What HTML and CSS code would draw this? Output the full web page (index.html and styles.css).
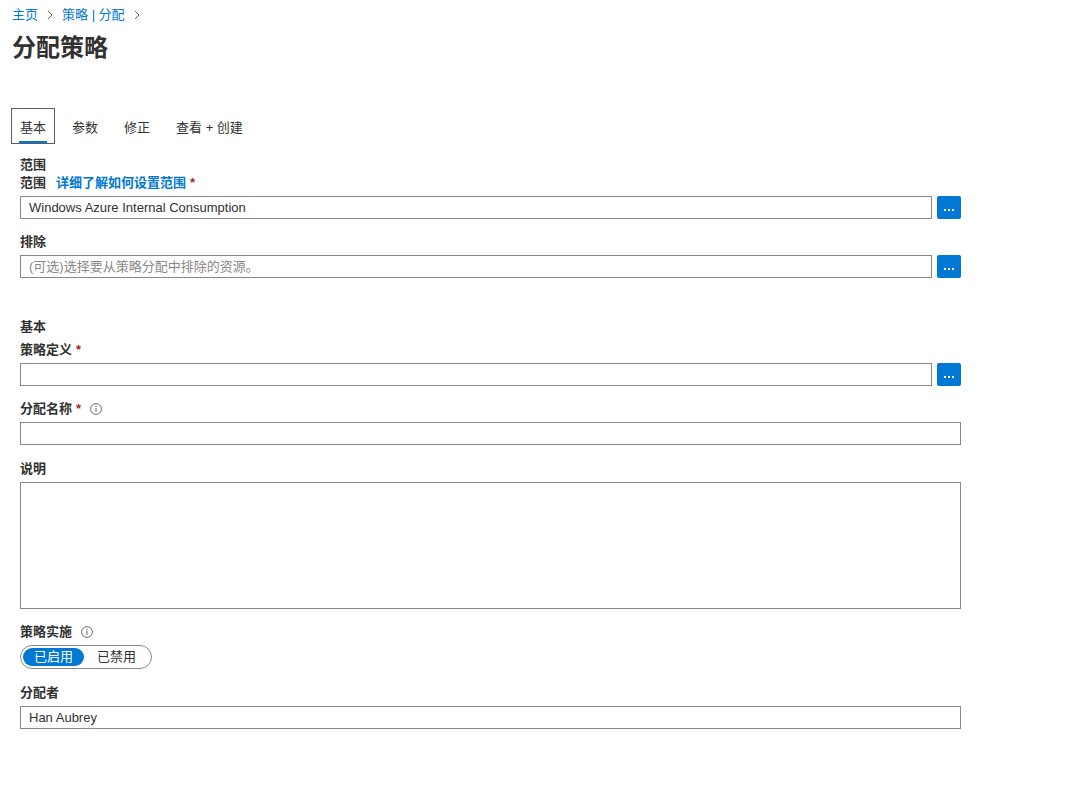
FILE: index.html
```html
<!DOCTYPE html>
<html lang="zh-CN">
<head>
    <meta charset="UTF-8">
    <meta name="viewport" content="width=device-width, initial-scale=1.0">
    <title>分配策略</title>
    <link rel="stylesheet" href="styles.css">
</head>
<body>
    <nav class="breadcrumb">
        <a href="#">主页</a>
        <span class="crumb-sep"><svg width="8" height="10" viewBox="0 0 8 10"><path d="M2 1l4 4-4 4" fill="none" stroke="#605e5c" stroke-width="1"/></svg></span>
        <a href="#">策略 | 分配</a>
        <span class="crumb-sep"><svg width="8" height="10" viewBox="0 0 8 10"><path d="M2 1l4 4-4 4" fill="none" stroke="#605e5c" stroke-width="1"/></svg></span>
    </nav>
    <h1 class="page-title">分配策略</h1>

    <div class="tabs">
        <div class="tab active">基本</div>
        <div class="tab">参数</div>
        <div class="tab">修正</div>
        <div class="tab">查看 + 创建</div>
    </div>

    <form class="form">
        <section class="section">
            <div class="section-title">范围</div>
            <div class="field first">
                <label class="label">范围 <a href="#" class="label-link">详细了解如何设置范围</a><span class="req">*</span></label>
                <div class="input-row">
                    <input class="input" type="text" value="Windows Azure Internal Consumption" readonly>
                    <button type="button" class="browse-btn" aria-label="浏览"><svg width="10" height="3" viewBox="0 0 10 3"><rect x="0" y="0" width="2" height="2" fill="#fff"/><rect x="4" y="0" width="2" height="2" fill="#fff"/><rect x="8" y="0" width="2" height="2" fill="#fff"/></svg></button>
                </div>
            </div>
            <div class="field">
                <label class="label">排除</label>
                <div class="input-row">
                    <input class="input" type="text" placeholder="(可选)选择要从策略分配中排除的资源。" readonly>
                    <button type="button" class="browse-btn" aria-label="浏览"><svg width="10" height="3" viewBox="0 0 10 3"><rect x="0" y="0" width="2" height="2" fill="#fff"/><rect x="4" y="0" width="2" height="2" fill="#fff"/><rect x="8" y="0" width="2" height="2" fill="#fff"/></svg></button>
                </div>
            </div>
        </section>

        <section class="section section-basic">
            <div class="section-title">基本</div>
            <div class="field first">
                <label class="label">策略定义<span class="req">*</span></label>
                <div class="input-row">
                    <input class="input" type="text" readonly>
                    <button type="button" class="browse-btn" aria-label="浏览"><svg width="10" height="3" viewBox="0 0 10 3"><rect x="0" y="0" width="2" height="2" fill="#fff"/><rect x="4" y="0" width="2" height="2" fill="#fff"/><rect x="8" y="0" width="2" height="2" fill="#fff"/></svg></button>
                </div>
            </div>
            <div class="field">
                <label class="label">分配名称<span class="req">*</span>
                    <svg class="info" width="12" height="12" viewBox="0 0 12 12"><circle cx="6" cy="6" r="5.4" fill="none" stroke="#605e5c" stroke-width="0.9"/><rect x="5.5" y="5" width="1" height="3.8" fill="#605e5c"/><circle cx="6" cy="3.5" r="0.65" fill="#605e5c"/></svg>
                </label>
                <input class="input" type="text">
            </div>
            <div class="field">
                <label class="label">说明</label>
                <textarea class="textarea"></textarea>
            </div>
            <div class="field">
                <label class="label">策略实施
                    <svg class="info" width="12" height="12" viewBox="0 0 12 12"><circle cx="6" cy="6" r="5.4" fill="none" stroke="#605e5c" stroke-width="0.9"/><rect x="5.5" y="5" width="1" height="3.8" fill="#605e5c"/><circle cx="6" cy="3.5" r="0.65" fill="#605e5c"/></svg>
                </label>
                <div class="toggle">
                    <span class="toggle-opt on">已启用</span>
                    <span class="toggle-opt">已禁用</span>
                </div>
            </div>
            <div class="field">
                <label class="label">分配者</label>
                <input class="input" type="text" value="Han Aubrey">
            </div>
        </section>
    </form>
</body>
</html>
```

FILE: styles.css
```css
body {
    margin: 0;
    font-family: "Segoe UI", "Liberation Sans", "Noto Sans CJK SC", sans-serif;
    font-size: 13px;
    color: #323130;
    background: #fff;
}

a {
    color: #0078d4;
    text-decoration: none;
}

.breadcrumb {
    display: flex;
    align-items: center;
    padding: 6px 0 0 12px;
    height: 18px;
    line-height: 18px;
}

.crumb-sep {
    display: flex;
    align-items: center;
    margin: 0 8px 0 8px;
}

.page-title {
    margin: 8px 0 0 12px;
    font-size: 24px;
    line-height: 32px;
    font-weight: 600;
    color: #323130;
}

.tabs {
    display: flex;
    gap: 8px;
    margin: 44px 0 0 11px;
}

.tab {
    position: relative;
    box-sizing: border-box;
    height: 36px;
    line-height: 34px;
    padding: 2px 8px 0 8px;
    border: 1px solid transparent;
    color: #323130;
}

.tab.active {
    border-color: #605e5c;
}

.tab.active::after {
    content: "";
    position: absolute;
    left: 7px;
    right: 7px;
    bottom: 0;
    height: 2px;
    background: #0078d4;
}

.form {
    padding: 12px 0 0 20px;
    width: 941px;
}

.section-title {
    line-height: 18px;
    font-weight: 600;
}

.section-basic {
    margin-top: 39.5px;
}

.section-basic .field.first {
    margin-top: 5px;
}

.field {
    margin-top: 14px;
}

.section-basic .field {
    margin-top: 14.5px;
}

.field.first {
    margin-top: 0;
}

.label {
    display: flex;
    align-items: center;
    line-height: 18px;
    margin-bottom: 4px;
    font-weight: 600;
}

.label-link {
    margin-left: 10px;
    font-weight: 600;
}

.req {
    color: #a4262c;
    margin-left: 4px;
}

.info {
    margin-left: 9px;
}

.input-row {
    display: flex;
    gap: 5px;
}

.input {
    box-sizing: border-box;
    display: block;
    width: 100%;
    height: 23px;
    margin: 0;
    padding: 0 8px;
    border: 1px solid #8a8886;
    border-radius: 0;
    font-family: inherit;
    font-size: 13px;
    color: #323130;
    background: #fff;
    outline: none;
}

.input-row .input {
    flex: 1;
}

.input::placeholder {
    color: #8a8886;
}

.browse-btn {
    flex: 0 0 24px;
    display: flex;
    align-items: flex-end;
    justify-content: center;
    height: 23px;
    padding: 0 0 7px 0;
    border: none;
    border-radius: 2px;
    background: #0078d4;
    cursor: pointer;
}

.textarea {
    box-sizing: border-box;
    display: block;
    width: 100%;
    height: 127px;
    margin: 0;
    border: 1px solid #8a8886;
    border-radius: 0;
    resize: none;
    font-family: inherit;
    outline: none;
}

.toggle {
    box-sizing: border-box;
    display: inline-flex;
    align-items: center;
    height: 24px;
    padding: 0 2px;
    border: 1px solid #8a8886;
    border-radius: 12px;
}

.toggle-opt {
    height: 18px;
    line-height: 18px;
    padding: 0 13px 0 13px;
    border-radius: 9px;
    color: #323130;
}

.toggle-opt.on {
    padding: 0 11px 0 11px;
    background: #0078d4;
    color: #fff;
}
```
